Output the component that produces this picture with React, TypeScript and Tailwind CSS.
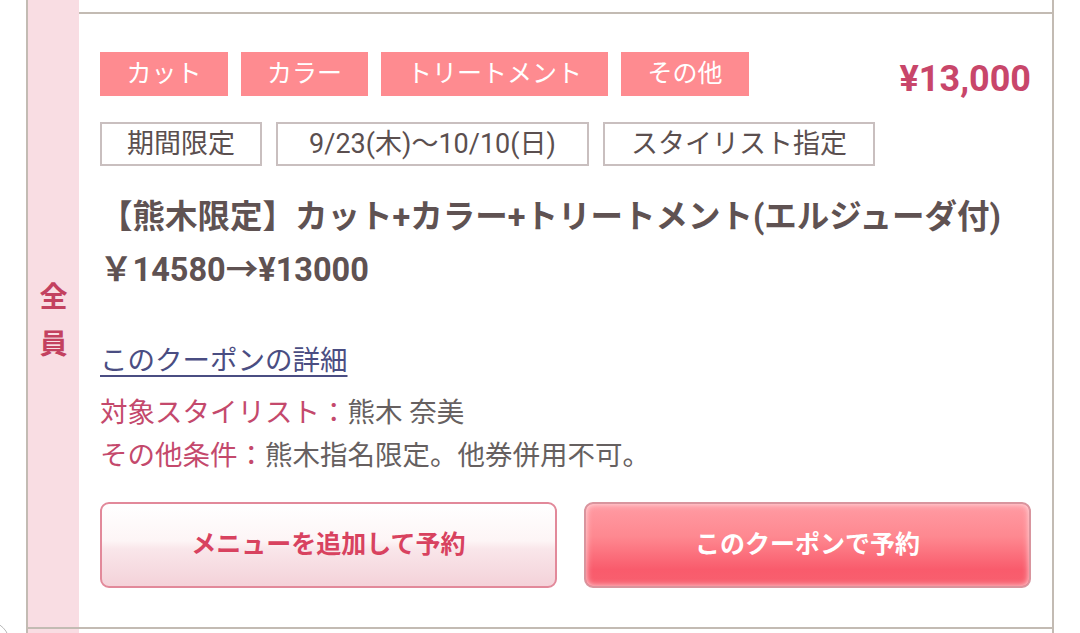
import React from "react";

const FONT = "font-['Roboto','Noto_Sans_CJK_JP',sans-serif]";

function Sidebar({ children }: { children?: React.ReactNode }) {
  return (
    <div className="w-[51px] shrink-0 bg-[#f9dde3] flex flex-col items-center justify-center">
      {children}
    </div>
  );
}

export default function App() {
  const tags = [
    { label: "カット", w: "w-[128px]" },
    { label: "カラー", w: "w-[127px]" },
    { label: "トリートメント", w: "w-[227px]" },
    { label: "その他", w: "w-[128px]" },
  ];
  return (
    <div className={`w-[1080px] h-[633px] bg-white relative overflow-hidden ${FONT}`}>
      <div className="ml-[26px] w-[1028px] h-full border-x-2 border-[#c3bbb3] flex flex-col">
        {/* top strip */}
        <div className="flex h-[14px] shrink-0">
          <Sidebar />
          <div className="flex-1 border-b-2 border-[#c3bbb3]" />
        </div>
        {/* main card */}
        <div className="flex h-[613px] shrink-0">
          <Sidebar>
            <span className="text-[28px] leading-[47px] font-bold text-[#c3415f]">全</span>
            <span className="text-[28px] leading-[47px] font-bold text-[#c3415f]">員</span>
          </Sidebar>
          <div className="flex-1 px-[21px] pt-[38px] flex flex-col">
            {/* tag row */}
            <div className="flex items-start h-[44px]">
              <div className="flex gap-[13px]">
                {tags.map((t) => (
                  <div
                    key={t.label}
                    className={`${t.w} h-[44px] bg-[#fe8b90] text-white text-[25px] leading-[44px] text-center`}
                  >
                    {t.label}
                  </div>
                ))}
              </div>
              <div className="ml-auto mt-[5px] text-[36px] leading-[44px] font-bold text-[#c8466a]">
                ¥13,000
              </div>
            </div>
            {/* outline tags */}
            <div className="flex gap-[14px] mt-[26px]">
              <div className="w-[162px] h-[44px] border-2 border-[#c9bfbf] text-[27px] leading-[40px] text-center text-[#5b4f4f]">
                期間限定
              </div>
              <div className="w-[313px] h-[44px] border-2 border-[#c9bfbf] text-[27px] leading-[40px] text-center text-[#5b4f4f]">
                9/23(木)〜10/10(日)
              </div>
              <div className="w-[272px] h-[44px] border-2 border-[#c9bfbf] text-[27px] leading-[40px] text-center text-[#5b4f4f]">
                スタイリスト指定
              </div>
            </div>
            {/* title */}
            <div className="mt-[25px] text-[32.5px] leading-[53px] font-bold text-[#5f5252]">
              <div>【熊木限定】カット+カラー+トリートメント(エルジューダ付)</div>
              <div>￥14580→¥13000</div>
            </div>
            {/* link */}
            <div className="mt-[44px] text-[27.5px] leading-[40px]">
              <span className="text-[#4a4d82] underline underline-offset-[5px] decoration-[1.5px]">
                このクーポンの詳細
              </span>
            </div>
            {/* info */}
            <div className="mt-[10px] text-[27.5px] leading-[43px]">
              <div>
                <span className="text-[#c4496c]">対象スタイリスト：</span>
                <span className="text-[#666060]">熊木 奈美</span>
              </div>
              <div>
                <span className="text-[#c4496c]">その他条件：</span>
                <span className="text-[#666060]">熊木指名限定。他券併用不可。</span>
              </div>
            </div>
            {/* buttons */}
            <div className="mt-[25px] flex justify-between">
              <div className="w-[457px] h-[86px] rounded-[9px] border-2 border-[#e2899a] bg-[linear-gradient(to_bottom,#ffffff_0%,#fdf5f6_45%,#f9e6ea_55%,#f4d2d9_100%)] flex items-center justify-center text-[25px] font-bold text-[#d8425f]">
                メニューを追加して予約
              </div>
              <div className="w-[447px] h-[86px] rounded-[9px] border-2 border-[#d9959e] bg-[linear-gradient(to_bottom,#ff9ba3_0%,#fe8890_40%,#f95b6c_80%,#f8606f_100%)] shadow-[inset_0_0_6px_rgba(255,235,238,0.9)] flex items-center justify-center text-[25px] font-bold text-white">
                このクーポンで予約
              </div>
            </div>
          </div>
        </div>
        {/* bottom border */}
        <div className="h-[2px] bg-[#c3bbb3] shrink-0" />
        <div className="flex flex-1">
          <Sidebar />
          <div className="flex-1" />
        </div>
      </div>
      {/* scroll button circle fragment */}
      <div className="absolute left-[-34px] top-[621px] w-[44px] h-[44px] rounded-full border border-[#b8b8b8] bg-white" />
    </div>
  );
}
